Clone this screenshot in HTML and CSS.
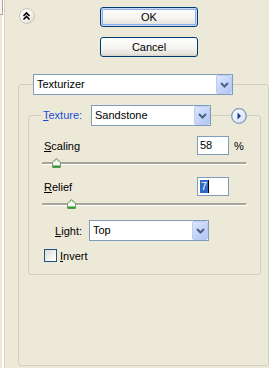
FILE: index.html
```html
<!DOCTYPE html>
<html lang="en">
<head>
  <meta charset="UTF-8" />
  <title>Texturizer</title>
  <link rel="stylesheet" href="styles.css">
</head>
<body>
  <div class="window">
    <div class="edge"><div class="edge-tab"></div></div>

    <div class="main">
      <div class="top">
        <span class="collapse">
          <svg width="16" height="16" viewBox="0 0 16 16">
            <defs>
              <linearGradient id="cg" x1="0" y1="0" x2="1" y2="1">
                <stop offset="0" stop-color="#ffffff" />
                <stop offset="0.6" stop-color="#f4f3ee" />
                <stop offset="1" stop-color="#cfcbbd" />
              </linearGradient>
            </defs>
            <circle cx="8" cy="8" r="7.5" fill="url(#cg)" stroke="#c9c6b8" />
            <path d="M4.5 8 L7.5 5 L10.5 8 M4.5 11.5 L7.5 8.5 L10.5 11.5" fill="none" stroke="#000" stroke-width="1.6" />
          </svg>
        </span>
        <div class="actions">
          <button class="btn btn-default">OK</button>
          <button class="btn">Cancel</button>
        </div>
      </div>

      <div class="group group-outer">
        <div class="group-title outer-title">
          <div class="combo combo-wide">
            <span class="combo-text">Texturizer</span>
            <span class="combo-btn">
              <svg width="9" height="6" viewBox="0 0 9 6"><path d="M1 1 L4.5 4.5 L8 1" fill="none" stroke="#4d6185" stroke-width="2" /></svg>
            </span>
          </div>
        </div>

        <div class="group group-inner">
          <div class="group-title inner-title">
            <span class="legend-label"><u>T</u>exture:</span>
            <div class="combo combo-small">
              <span class="combo-text">Sandstone</span>
              <span class="combo-btn">
                <svg width="9" height="6" viewBox="0 0 9 6"><path d="M1 1 L4.5 4.5 L8 1" fill="none" stroke="#4d6185" stroke-width="2" /></svg>
              </span>
            </div>
            <span class="load-btn">
              <svg width="16" height="16" viewBox="0 0 16 16">
                <defs>
                  <linearGradient id="lg" x1="0" y1="0" x2="1" y2="1">
                    <stop offset="0" stop-color="#ffffff" />
                    <stop offset="1" stop-color="#d3def5" />
                  </linearGradient>
                </defs>
                <circle cx="8" cy="8" r="7.3" fill="url(#lg)" stroke="#7f9db9" stroke-width="1.3" />
                <path d="M6.5 4.5 L10 8 L6.5 11.5 Z" fill="#1c3a8c" />
              </svg>
            </span>
          </div>

          <div class="group-body">
            <div class="field-row">
              <span class="field-label"><u>S</u>caling</span>
              <span class="field">58</span>
              <span class="unit">%</span>
            </div>
            <div class="slider slider-scaling">
              <div class="track"></div>
              <span class="thumb" style="left: 10px">
                <svg width="9" height="10" viewBox="0 0 9 10">
                  <path d="M0.5 9.5 V4 L4.5 0.5 L8.5 4 V9.5 Z" fill="#f7f6f1" stroke="#8c8c86" />
                  <path d="M1 8.5 H8" stroke="#22a322" stroke-width="2" />
                  <path d="M1.5 4 L4.5 1.5 L7.5 4" fill="none" stroke="#7ed37e" />
                </svg>
              </span>
            </div>

            <div class="field-row">
              <span class="field-label"><u>R</u>elief</span>
              <span class="field"><span class="selected">7</span><span class="caret"></span></span>
            </div>
            <div class="slider slider-relief">
              <div class="track"></div>
              <span class="thumb" style="left: 25px">
                <svg width="9" height="10" viewBox="0 0 9 10">
                  <path d="M0.5 9.5 V4 L4.5 0.5 L8.5 4 V9.5 Z" fill="#f7f6f1" stroke="#8c8c86" />
                  <path d="M1 8.5 H8" stroke="#22a322" stroke-width="2" />
                  <path d="M1.5 4 L4.5 1.5 L7.5 4" fill="none" stroke="#7ed37e" />
                </svg>
              </span>
            </div>

            <div class="light-row">
              <span class="light-label"><u>L</u>ight:</span>
              <div class="combo combo-small">
                <span class="combo-text">Top</span>
                <span class="combo-btn">
                  <svg width="9" height="6" viewBox="0 0 9 6"><path d="M1 1 L4.5 4.5 L8 1" fill="none" stroke="#4d6185" stroke-width="2" /></svg>
                </span>
              </div>
            </div>

            <div class="check-row">
              <span class="checkbox"></span>
              <span class="check-label"><u>I</u>nvert</span>
            </div>
          </div>
        </div>
      </div>
    </div>
  </div>
</body>
</html>
```

FILE: styles.css
```css
body {
  margin: 0;
  padding: 0;
  background-color: #ece9d8;
  font-family: 'Liberation Sans', Arial, sans-serif;
  font-size: 11px;
  color: #000;
}

.window {
  display: flex;
  width: 269px;
  height: 368px;
  overflow: hidden;
}

u {
  text-decoration: underline;
  text-underline-offset: 1px;
}

/* left frame strip */
.edge {
  width: 5px;
  flex-shrink: 0;
  background: linear-gradient(to right, #ece9d8 0 2px, #ffffff 2px 4px, #d8d4c6 4px 5px);
}
.edge-tab {
  width: 2px;
  height: 14px;
  background: #f4f3ee;
  border-right: 1px solid #aca899;
  border-bottom: 1px solid #aca899;
}

.main {
  flex: 1;
}

/* collapse + OK / Cancel */
.top {
  display: flex;
  padding: 7px 0 0 14px;
}
.collapse {
  display: block;
  width: 16px;
  height: 16px;
  margin-top: 1px;
}
.collapse svg {
  display: block;
}
.actions {
  display: flex;
  flex-direction: column;
  gap: 10px;
  width: 98px;
  margin-left: 65px;
}
.btn {
  display: block;
  width: 98px;
  height: 20px;
  margin: 0;
  padding: 0;
  border: 1px solid #003c74;
  border-radius: 3px;
  background: linear-gradient(#ffffff 0%, #f5f4f0 55%, #e6e4dc 88%, #d6d0c5 100%);
  font-family: 'Liberation Sans', Arial, sans-serif;
  font-size: 11px;
  color: #000;
  line-height: 18px;
}
.btn-default {
  box-shadow: inset 0 0 0 1px #c6d7f9, inset 0 0 0 2px #8eb0ea;
}

/* group boxes */
.group {
  box-sizing: border-box;
  border: 1px solid #d0d0bf;
  border-radius: 3px;
}
.group-outer {
  width: 251px;
  height: 282px;
  margin: 27px 0 0 13px;
}
.group-inner {
  height: 160px;
  margin: 20px 7px 0 9px;
}
.group-title {
  display: flex;
  align-items: center;
  height: 21px;
  margin-top: -11px;
}
.outer-title {
  padding-left: 14px;
}
.inner-title {
  padding-left: 12px;
}
.legend-label {
  box-sizing: border-box;
  width: 50px;
  padding-left: 2px;
  line-height: 21px;
  background-color: #ece9d8;
  color: #1a4bd6;
}
.load-btn {
  display: block;
  width: 16px;
  height: 16px;
  margin-left: 20px;
}
.load-btn svg {
  display: block;
}

/* combo boxes */
.combo {
  box-sizing: border-box;
  display: flex;
  height: 21px;
  border: 1px solid #7f9db9;
  background: #fff;
}
.combo-wide {
  width: 200px;
}
.combo-small {
  width: 120px;
}
.combo-text {
  flex: 1;
  padding-left: 3px;
  line-height: 19px;
}
.combo-btn {
  display: flex;
  align-items: center;
  justify-content: center;
  box-sizing: border-box;
  width: 16px;
  height: 19px;
  border: 1px solid #bccbf0;
  border-radius: 2px;
  background: linear-gradient(135deg, #dde7fd 0%, #c3d4fa 55%, #b2c6f5 100%);
}
.combo-btn svg {
  display: block;
}

/* fields and sliders */
.group-body {
  padding: 10px 0 0 15px;
}
.field-row {
  display: flex;
  align-items: center;
  height: 19px;
}
.field-label {
  width: 153px;
}
.field {
  box-sizing: border-box;
  display: flex;
  align-items: center;
  width: 32px;
  height: 19px;
  padding-left: 2px;
  border: 1px solid #7f9db9;
  background: #fff;
  line-height: 17px;
}
.selected {
  display: inline-block;
  padding: 0 1px;
  line-height: 13px;
  background: #316ac5;
  color: #fff;
}
.caret {
  display: inline-block;
  width: 1px;
  height: 13px;
  background: #000;
}
.unit {
  margin-left: 5px;
}

.slider {
  position: relative;
  box-sizing: border-box;
  width: 205px;
  margin-left: -2px;
  padding-top: 7px;
}
.slider-scaling {
  height: 22px;
}
.slider-relief {
  height: 24px;
}
.track {
  height: 0;
  border-top: 2px solid #a7a59a;
  border-bottom: 1px solid #ffffff;
  border-right: 1px solid #ffffff;
  border-radius: 1px;
}
.thumb {
  position: absolute;
  top: 3px;
  width: 9px;
  height: 10px;
}
.thumb svg {
  display: block;
}

.light-row {
  display: flex;
  align-items: center;
  height: 21px;
}
.light-label {
  width: 38px;
  margin-right: 7px;
  text-align: right;
}

.check-row {
  display: flex;
  align-items: center;
  height: 13px;
  margin-top: 8px;
}
.checkbox {
  box-sizing: border-box;
  width: 13px;
  height: 13px;
  border: 1px solid #1c5180;
  background: linear-gradient(135deg, #dcdbd5 0%, #f3f2ee 60%, #ffffff 100%);
}
.check-label {
  margin-left: 3px;
}
```
